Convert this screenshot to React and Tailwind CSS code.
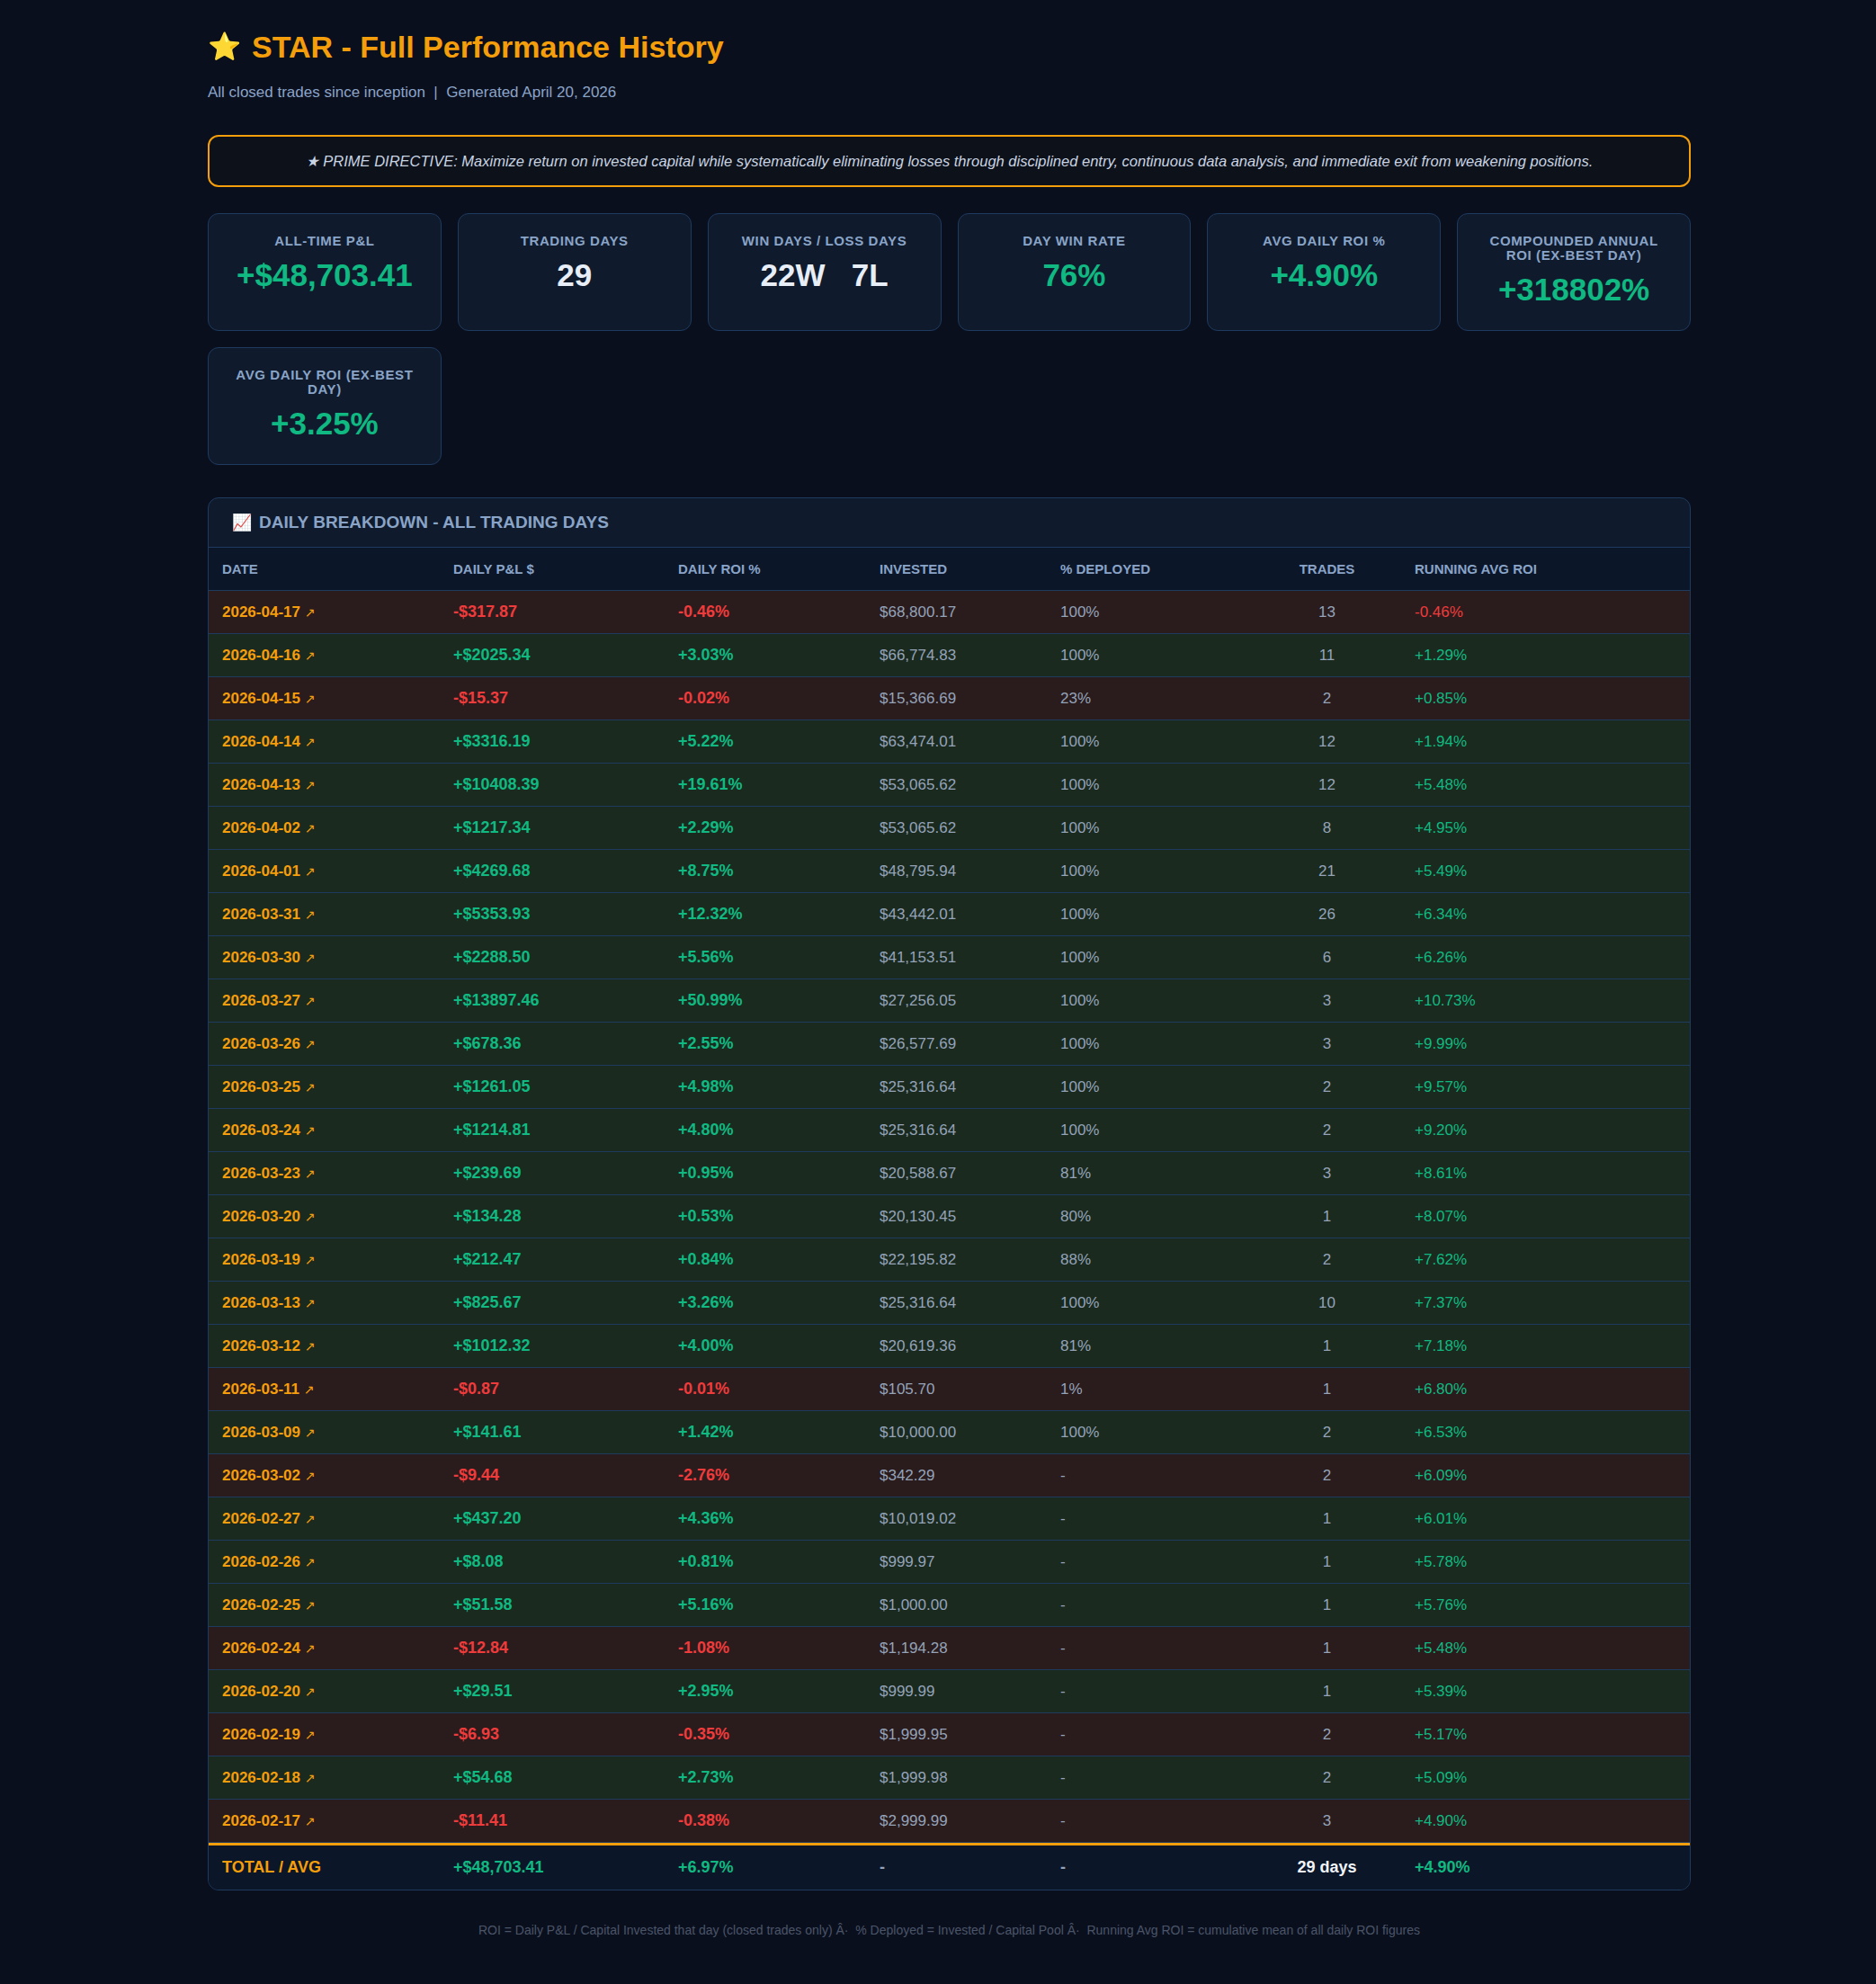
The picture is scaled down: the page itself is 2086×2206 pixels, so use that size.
import React from "react";

const rows = [
  ["2026-04-17", "-$317.87", "-0.46%", "$68,800.17", "100%", 13, "-0.46%"],
  ["2026-04-16", "+$2025.34", "+3.03%", "$66,774.83", "100%", 11, "+1.29%"],
  ["2026-04-15", "-$15.37", "-0.02%", "$15,366.69", "23%", 2, "+0.85%"],
  ["2026-04-14", "+$3316.19", "+5.22%", "$63,474.01", "100%", 12, "+1.94%"],
  ["2026-04-13", "+$10408.39", "+19.61%", "$53,065.62", "100%", 12, "+5.48%"],
  ["2026-04-02", "+$1217.34", "+2.29%", "$53,065.62", "100%", 8, "+4.95%"],
  ["2026-04-01", "+$4269.68", "+8.75%", "$48,795.94", "100%", 21, "+5.49%"],
  ["2026-03-31", "+$5353.93", "+12.32%", "$43,442.01", "100%", 26, "+6.34%"],
  ["2026-03-30", "+$2288.50", "+5.56%", "$41,153.51", "100%", 6, "+6.26%"],
  ["2026-03-27", "+$13897.46", "+50.99%", "$27,256.05", "100%", 3, "+10.73%"],
  ["2026-03-26", "+$678.36", "+2.55%", "$26,577.69", "100%", 3, "+9.99%"],
  ["2026-03-25", "+$1261.05", "+4.98%", "$25,316.64", "100%", 2, "+9.57%"],
  ["2026-03-24", "+$1214.81", "+4.80%", "$25,316.64", "100%", 2, "+9.20%"],
  ["2026-03-23", "+$239.69", "+0.95%", "$20,588.67", "81%", 3, "+8.61%"],
  ["2026-03-20", "+$134.28", "+0.53%", "$20,130.45", "80%", 1, "+8.07%"],
  ["2026-03-19", "+$212.47", "+0.84%", "$22,195.82", "88%", 2, "+7.62%"],
  ["2026-03-13", "+$825.67", "+3.26%", "$25,316.64", "100%", 10, "+7.37%"],
  ["2026-03-12", "+$1012.32", "+4.00%", "$20,619.36", "81%", 1, "+7.18%"],
  ["2026-03-11", "-$0.87", "-0.01%", "$105.70", "1%", 1, "+6.80%"],
  ["2026-03-09", "+$141.61", "+1.42%", "$10,000.00", "100%", 2, "+6.53%"],
  ["2026-03-02", "-$9.44", "-2.76%", "$342.29", "-", 2, "+6.09%"],
  ["2026-02-27", "+$437.20", "+4.36%", "$10,019.02", "-", 1, "+6.01%"],
  ["2026-02-26", "+$8.08", "+0.81%", "$999.97", "-", 1, "+5.78%"],
  ["2026-02-25", "+$51.58", "+5.16%", "$1,000.00", "-", 1, "+5.76%"],
  ["2026-02-24", "-$12.84", "-1.08%", "$1,194.28", "-", 1, "+5.48%"],
  ["2026-02-20", "+$29.51", "+2.95%", "$999.99", "-", 1, "+5.39%"],
  ["2026-02-19", "-$6.93", "-0.35%", "$1,999.95", "-", 2, "+5.17%"],
  ["2026-02-18", "+$54.68", "+2.73%", "$1,999.98", "-", 2, "+5.09%"],
  ["2026-02-17", "-$11.41", "-0.38%", "$2,999.99", "-", 3, "+4.90%"],
];

const cards = [
  ["ALL-TIME P&L", "+$48,703.41", "text-[#10b981]"],
  ["TRADING DAYS", "29", "text-[#e8eef8]"],
  ["WIN DAYS / LOSS DAYS", "22W\u00a0\u00a0\u00a07L", "text-[#e8eef8]"],
  ["DAY WIN RATE", "76%", "text-[#10b981]"],
  ["AVG DAILY ROI %", "+4.90%", "text-[#10b981]"],
  ["COMPOUNDED ANNUAL ROI (EX-BEST DAY)", "+318802%", "text-[#10b981]"],
  ["AVG DAILY ROI (EX-BEST DAY)", "+3.25%", "text-[#10b981]"],
];

const cols = "grid grid-cols-[257px_250px_224px_201px_229px_165px_1fr]";

const Card = ({ label, value, color }) => (
  <div className="flex h-[131px] flex-col items-center rounded-[12px] border border-[#1e3a5f] bg-[#0f1b2d] px-5 pt-[22px] text-center">
    <div className="text-[15px] font-bold leading-[16px] tracking-[0.6px] text-[#8aa4c8]">{label}</div>
    <div className={`mt-[10px] text-[35px] font-bold leading-[40px] ${color}`}>{value}</div>
  </div>
);

export default function App() {
  return (
    <div className="min-h-screen bg-[#0a0f1e] pb-[40px] font-[family-name:Liberation_Sans,Arial,sans-serif]">
      <div className="ml-[231px] w-[1649px] pt-[30px]">
        <h1 className="flex items-center gap-[12px] text-[34px] font-bold leading-[44px] text-[#f59e0b]">
          <span className="text-[30px]">⭐</span>STAR - Full Performance History
        </h1>
        <p className="mt-[16px] text-[17px] text-[#8aa4c8]">All closed trades since inception&nbsp; |&nbsp; Generated April 20, 2026</p>

        <div className="mt-[34px] rounded-[12px] border-2 border-[#f59e0b] bg-[#0d1119] py-[15px] text-center text-[16.5px] italic text-[#c9d4e3]">
          ★ PRIME DIRECTIVE: Maximize return on invested capital while systematically eliminating losses through disciplined entry, continuous data analysis, and immediate exit from weakening positions.
        </div>

        <div className="mt-[29px] grid grid-cols-6 gap-[18px]">
          {cards.map(([l, v, c]) => (
            <Card key={l} label={l} value={v} color={c} />
          ))}
        </div>

        <div className="mt-[36px] overflow-hidden rounded-[12px] border border-[#1e3a5f] bg-[#0f1b2d]">
          <div className="flex h-[55px] items-center gap-[8px] border-b border-[#1e3a5f] px-[26px] text-[19px] font-bold text-[#8aa4c8]">
            <span className="text-[18px]">📈</span>DAILY BREAKDOWN - ALL TRADING DAYS
          </div>
          <div className={`${cols} h-[48px] items-center border-b border-[#1e3a5f] bg-[#0b1628] text-[15px] font-bold text-[#8aa4c8]`}>
            <div className="pl-[15px]">DATE</div>
            <div className="pl-[15px]">DAILY P&L $</div>
            <div className="pl-[15px]">DAILY ROI %</div>
            <div className="pl-[15px]">INVESTED</div>
            <div className="pl-[15px]">% DEPLOYED</div>
            <div className="text-center">TRADES</div>
            <div className="pl-[15px]">RUNNING AVG ROI</div>
          </div>
          {rows.map((r) => {
            const neg = r[1].startsWith("-");
            const c = neg ? "text-[#ef3b3b]" : "text-[#10b981]";
            const rc = r[6].startsWith("-") ? "text-[#ef3b3b]" : "text-[#10b981]";
            return (
              <div
                key={r[0]}
                className={`${cols} h-[48px] items-center border-b border-[#1e3a5f] text-[17px] ${neg ? "bg-[#2a1b1d]" : "bg-[#1a2a1f]"}`}
              >
                <div className="pl-[15px] font-bold text-[#f59e0b]">
                  {r[0]} <span className="font-[family-name:DejaVu_Sans,sans-serif] text-[14px] font-normal">{"\u2197\uFE0E"}</span>
                </div>
                <div className={`pl-[15px] text-[18px] font-bold ${c}`}>{r[1]}</div>
                <div className={`pl-[15px] text-[18px] font-bold ${c}`}>{r[2]}</div>
                <div className="pl-[15px] text-[#94a3b8]">{r[3]}</div>
                <div className="pl-[15px] text-[#94a3b8]">{r[4]}</div>
                <div className="text-center text-[#94a3b8]">{r[5]}</div>
                <div className={`pl-[15px] ${rc}`}>{r[6]}</div>
              </div>
            );
          })}
          <div className={`${cols} h-[52px] items-center border-t-[3px] border-[#f59e0b] bg-[#0b1628] text-[18px] font-bold`}>
            <div className="pl-[15px] text-[#f59e0b]">TOTAL / AVG</div>
            <div className="pl-[15px] text-[#10b981]">+$48,703.41</div>
            <div className="pl-[15px] text-[#10b981]">+6.97%</div>
            <div className="pl-[15px] text-[#94a3b8]">-</div>
            <div className="pl-[15px] text-[#94a3b8]">-</div>
            <div className="text-center text-[#f1f5f9]">29 days</div>
            <div className="pl-[15px] text-[#10b981]">+4.90%</div>
          </div>
        </div>

        <p className="mt-[34px] text-center text-[14px] text-[#4a5568]">
          ROI = Daily P&L / Capital Invested that day (closed trades only) Â·&nbsp; % Deployed = Invested / Capital Pool Â·&nbsp; Running Avg ROI = cumulative mean of all daily ROI figures
        </p>
      </div>
    </div>
  );
}
